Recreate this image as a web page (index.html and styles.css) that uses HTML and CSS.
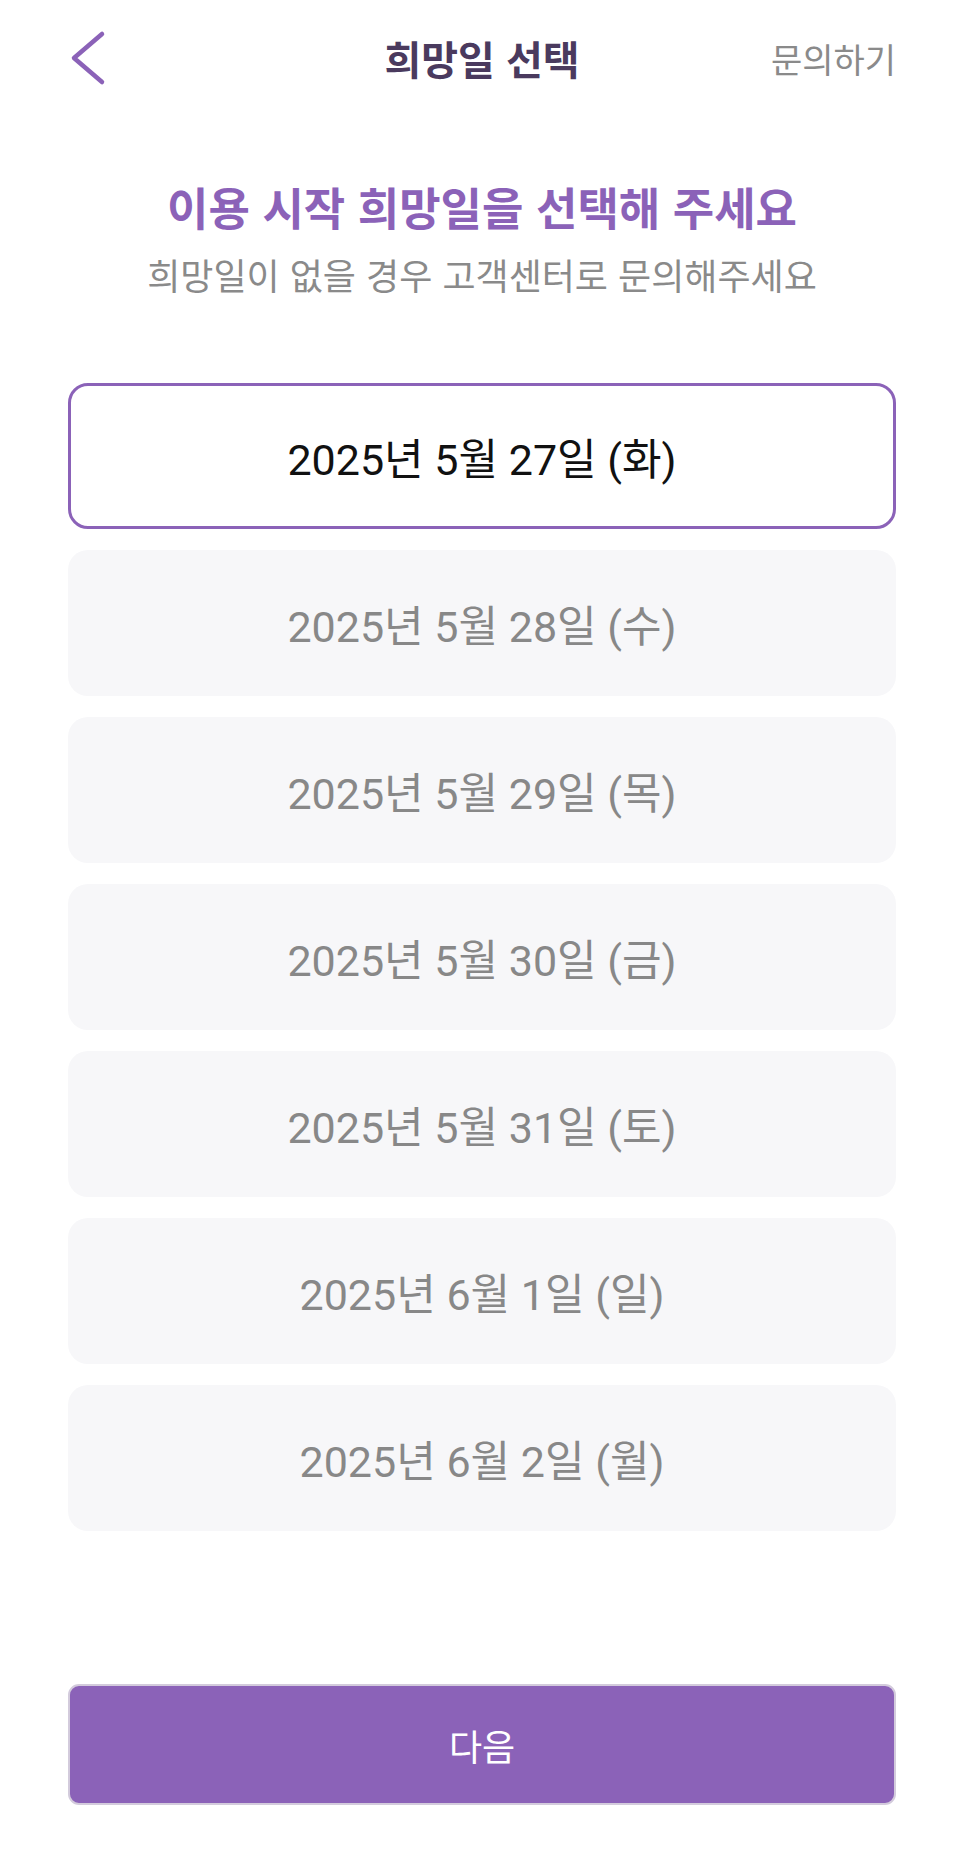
FILE: index.html
```html
<!DOCTYPE html>
<html lang="ko">
<head>
  <meta charset="UTF-8">
  <meta name="viewport" content="width=device-width, initial-scale=1.0">
  <title>희망일 선택</title>

  <link rel="stylesheet" href="styles.css">
</head>
<body>
  <div class="screen">
    <div class="header">
      <div class="back">
        <svg width="40" height="56" viewBox="0 0 40 56">
          <path d="M34 4 L6 28 L34 52" fill="none" stroke="#8b62b8" stroke-width="4.5" stroke-linecap="round" stroke-linejoin="round"/>
        </svg>
      </div>
      <div class="header-title">희망일 선택</div>
      <div class="header-link">문의하기</div>
    </div>

    <div class="intro">
      <div class="intro-title">이용 시작 희망일을 선택해 주세요</div>
      <div class="intro-sub">희망일이 없을 경우 고객센터로 문의해주세요</div>
    </div>

    <div class="dates">
      <div class="date selected">2025년 5월 27일 (화)</div>
      <div class="date">2025년 5월 28일 (수)</div>
      <div class="date">2025년 5월 29일 (목)</div>
      <div class="date">2025년 5월 30일 (금)</div>
      <div class="date">2025년 5월 31일 (토)</div>
      <div class="date">2025년 6월 1일 (일)</div>
      <div class="date">2025년 6월 2일 (월)</div>
    </div>

    <div class="footer">
      <div class="next-btn">다음</div>
    </div>
  </div>
</body>
</html>
```

FILE: styles.css
```css
* {
  box-sizing: border-box;
}

body {
  margin: 0;
  font-family: Roboto, "Noto Sans CJK KR", sans-serif;
  background: #fff;
  color: #111;
}

.screen {
  width: 966px;
  min-height: 1856px;
  padding: 0 70px 0 68px;
}

.header {
  display: grid;
  grid-template-columns: 1fr auto 1fr;
  align-items: center;
  height: 116px;
}

.back {
  display: flex;
  align-items: center;
}

.header-title {
  font-family: "Noto Sans CJK KR", sans-serif;
  font-weight: 700;
  font-size: 40px;
  color: #4a3a5e;
}

.header-link {
  justify-self: end;
  font-family: "Noto Sans CJK KR", sans-serif;
  font-size: 34px;
  color: #8a8a8a;
}

.intro {
  display: flex;
  flex-direction: column;
  align-items: center;
  margin-top: 61px;
}

.intro-title {
  font-family: "Noto Sans CJK KR", sans-serif;
  font-weight: 700;
  font-size: 45px;
  line-height: 60px;
  color: #8b62b8;
}

.intro-sub {
  margin-top: 12px;
  font-family: "Noto Sans CJK KR", sans-serif;
  font-size: 36px;
  line-height: 50px;
  color: #8a8a8a;
}

.dates {
  display: flex;
  flex-direction: column;
  gap: 21px;
  margin-top: 84px;
}

.date {
  display: flex;
  align-items: center;
  justify-content: center;
  height: 146px;
  border-radius: 20px;
  background: #f7f7f9;
  font-size: 43px;
  color: #888;
}

.date.selected {
  background: #fff;
  border: 3px solid #8b62b8;
  color: #111;
}

.footer {
  margin-top: 153px;
}

.next-btn {
  display: flex;
  align-items: center;
  justify-content: center;
  height: 121px;
  border-radius: 11px;
  background: #8b62b8;
  border: 2px solid #d3cbdc;
  font-family: "Noto Sans CJK KR", sans-serif;
  font-size: 36px;
  color: #fff;
}
```
